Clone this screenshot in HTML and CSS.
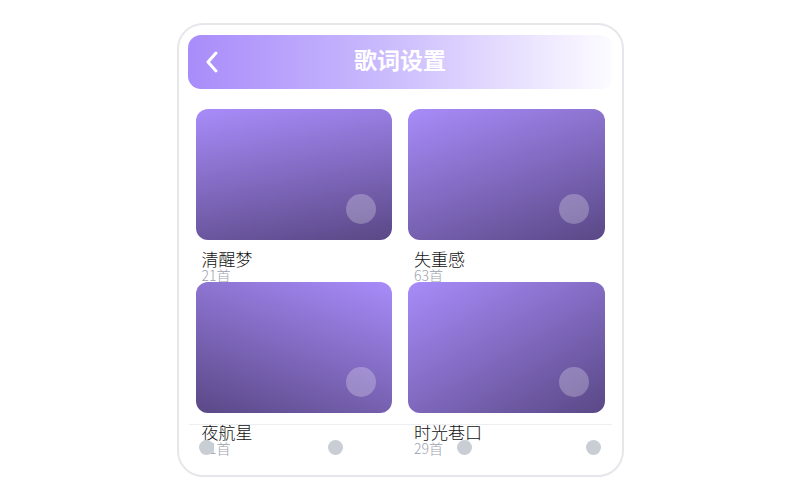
FILE: index.html
```html
<!DOCTYPE html>
<html>
	<head>
		<meta charset="UTF-8">
		<title>歌词设置</title>
		<meta name="viewport" content="width=device-width initial-scale=1 user-scalable=no" />
		<link rel="stylesheet" href="styles.css">
	</head>
	<body>
		<div class="phone">
			<div class="top_bar">
				<svg class="back" width="14" height="22" viewBox="0 0 14 22">
					<path d="M11 2 L3 11 L11 20" fill="none" stroke="#fff" stroke-width="3" stroke-linecap="round" stroke-linejoin="round" />
				</svg>
				<h1>歌词设置</h1>
			</div>
			<ul class="list">
				<li>
					<div class="cover c1"><span class="dot"></span></div>
					<p class="name">清醒梦</p>
					<p class="count">21首</p>
				</li>
				<li>
					<div class="cover c2"><span class="dot"></span></div>
					<p class="name">失重感</p>
					<p class="count">63首</p>
				</li>
				<li>
					<div class="cover c3"><span class="dot"></span></div>
					<p class="name">夜航星</p>
					<p class="count">11首</p>
				</li>
				<li>
					<div class="cover c4"><span class="dot"></span></div>
					<p class="name">时光巷口</p>
					<p class="count">29首</p>
				</li>
			</ul>
			<div class="tab_bar">
				<span></span>
				<span></span>
				<span></span>
				<span></span>
			</div>
		</div>
	</body>
</html>
```

FILE: styles.css
```css
html,body,div,ul,li,p,h1{margin: 0; padding: 0;}
ul,li{list-style: none;}
body{
	background: #fff;
	font-family: "Noto Sans CJK SC", sans-serif;
}
.phone{
	position: relative;
	width: 447px;
	height: 454px;
	box-sizing: border-box;
	margin: 23px auto 0;
	padding: 10px 9px;
	border: 2px solid #e5e7eb;
	border-radius: 26px;
	overflow: hidden;
}
.top_bar{
	position: relative;
	height: 54px;
	border-radius: 13px;
	background: linear-gradient(90deg, #a88cfa 0%, #c9b9fd 45%, #fdfcff 100%);
	display: flex;
	align-items: center;
	justify-content: center;
}
.top_bar .back{
	position: absolute;
	left: 17px;
	top: 16px;
}
.top_bar h1{
	margin-bottom: 6px;
	color: #fff;
	font-size: 23px;
	line-height: 24px;
	font-weight: bold;
}
.list{
	display: grid;
	grid-template-columns: 1fr 1fr;
	column-gap: 16px;
	margin: 20px 8px 0;
}
.cover{
	position: relative;
	height: 131px;
	border-radius: 12px;
}
.c1{background: linear-gradient(170deg, #a88cfa, #5a4886);}
.c2{background: linear-gradient(160deg, #a88cfa, #5a4886);}
.c3{background: linear-gradient(200deg, #a88cfa, #5a4886);}
.c4{background: linear-gradient(150deg, #a88cfa, #5a4886);}
.cover .dot{
	position: absolute;
	right: 16px;
	bottom: 16px;
	width: 30px;
	height: 30px;
	border-radius: 50%;
	background: rgba(255,255,255,0.25);
}
.name{
	margin-top: 8px;
	padding-left: 6px;
	font-size: 17px;
	line-height: 21px;
	color: #111;
	font-weight: 300;
}
.count{
	margin-top: -1px;
	padding-left: 6px;
	font-size: 14px;
	line-height: 14px;
	color: #9ca3af;
	font-weight: 300;
}
.tab_bar{
	position: absolute;
	left: 10px;
	right: 10px;
	bottom: 5px;
	height: 46px;
	box-sizing: border-box;
	padding: 15px 10px 0;
	border-top: 1px solid #eceef2;
	display: flex;
	justify-content: space-between;
	align-items: flex-start;
}
.tab_bar span{
	width: 15px;
	height: 15px;
	border-radius: 50%;
	background: #c9cdd4;
}
```
